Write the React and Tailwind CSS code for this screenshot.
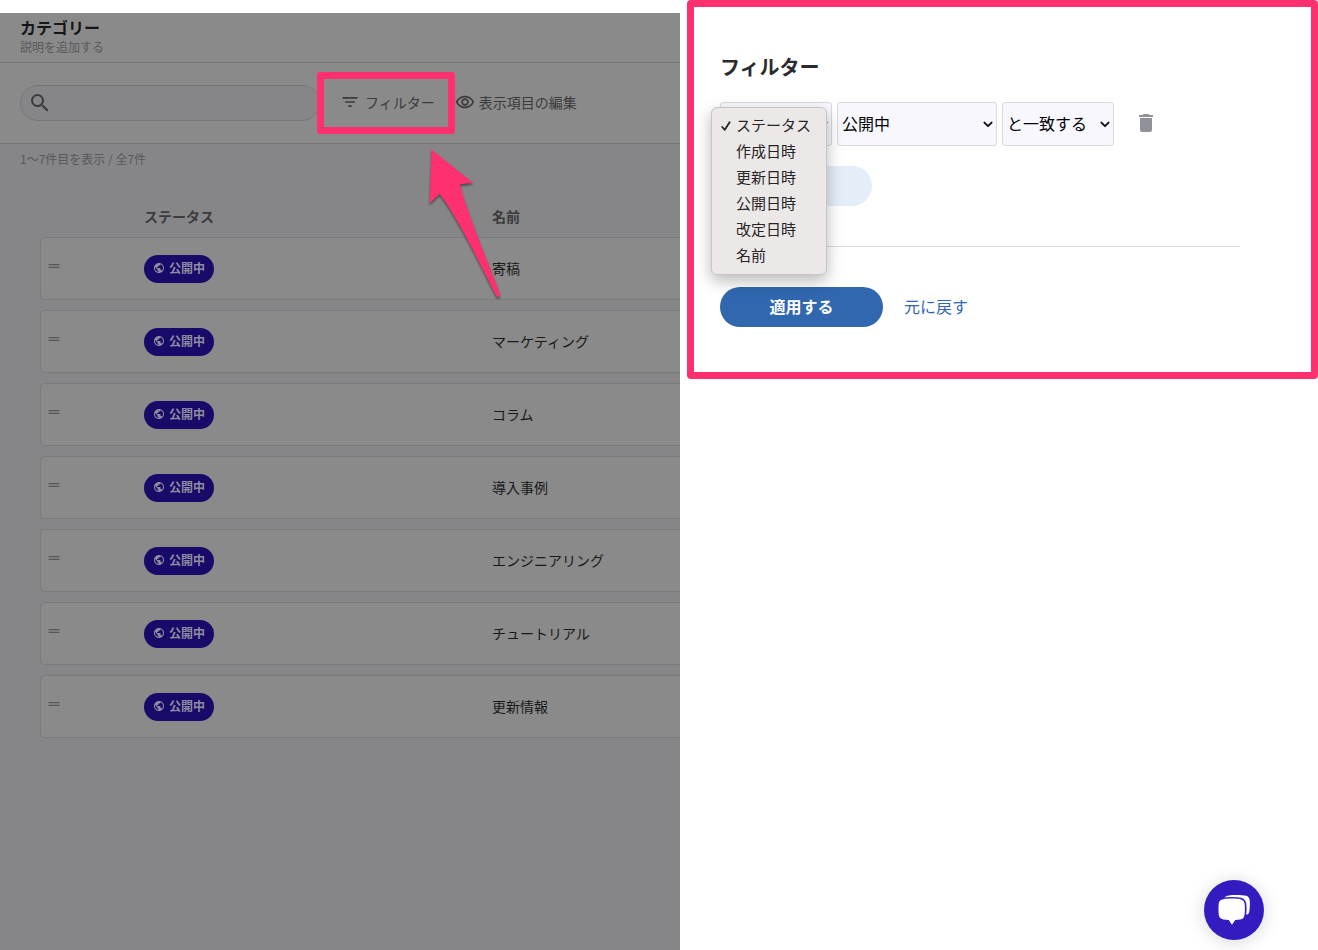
import React, { useState } from "react";
import {
  MdSearch,
  MdFilterList,
  MdOutlineRemoveRedEye,
  MdDragHandle,
  MdPublic,
  MdDelete,
} from "react-icons/md";

const categories = [
  "寄稿",
  "マーケティング",
  "コラム",
  "導入事例",
  "エンジニアリング",
  "チュートリアル",
  "更新情報",
];

const fields = ["ステータス", "作成日時", "更新日時", "公開日時", "改定日時", "名前"];

function StatusBadge() {
  return (
    <span className="inline-flex h-7 w-[70px] items-center justify-center gap-1 rounded-full bg-[#180a68] pb-px align-middle text-xs font-bold text-[#8e8ca0]">
      <MdPublic className="size-3 shrink-0" />
      公開中
    </span>
  );
}

function Arrow() {
  return (
    <svg
      className="pointer-events-none absolute top-[146px] left-[424px] h-[156px] w-[84px] drop-shadow-[0_2px_1px_rgba(0,0,0,0.45)]"
      viewBox="424 146 84 156"
      aria-hidden="true"
    >
      <path
        d="M431.5 149.5 L473 182.7 L460 184.3 C465 206 485 255 500 294 C500.6 297 497.5 298 496 295.5 C477 258 458 218 439.7 194 L429.7 203.3 Z"
        fill="#ff3070"
      />
    </svg>
  );
}

function CategoryList() {
  return (
    <main className="mt-[13px] flex min-w-0 flex-col overflow-hidden bg-[#868688]">
      <header className="flex h-[50px] flex-col border-b border-[#757577] bg-[#8a8a8a] px-5 pt-1">
        <h1 className="text-base leading-5 font-bold text-[#161617]">カテゴリー</h1>
        <p className="text-xs leading-5 text-[#58585c]">説明を追加する</p>
      </header>

      <div className="flex h-[81px] items-center border-b border-[#757577] bg-[#8a8a8a] px-5">
        <label className="flex h-9 w-[300px] shrink-0 items-center rounded-full border border-[#77777b] bg-[#868688] pl-[7px] text-[#3b3b3e]">
          <MdSearch className="size-6 shrink-0" />
          <input
            type="search"
            aria-label="検索"
            className="min-w-0 flex-1 bg-transparent px-2 text-sm outline-none"
          />
        </label>
        <button
          type="button"
          className="relative ml-5 flex shrink-0 items-center gap-[5px] pb-0.5 text-sm text-[#3b3b3e]"
        >
          <MdFilterList className="size-5" />
          フィルター
          <span className="pointer-events-none absolute top-1/2 -right-5 -left-[23px] h-[62px] -translate-y-1/2 rounded-[3px] border-[7px] border-[#ff3070]" />
        </button>
        <button
          type="button"
          className="ml-5 flex shrink-0 items-center gap-1 pb-0.5 text-sm text-[#3b3b3e]"
        >
          <MdOutlineRemoveRedEye className="size-5" />
          表示項目の編集
        </button>
      </div>

      <p className="px-5 pt-[5px] text-xs leading-5 text-[#58585c]">1〜7件目を表示 / 全7件</p>

      <div className="pt-7 pl-10">
        <table className="w-full table-fixed border-separate border-spacing-x-0 border-spacing-y-[10px] text-left text-sm">
          <colgroup>
            <col className="w-[104px]" />
            <col className="w-[348px]" />
            <col />
          </colgroup>
          <thead>
            <tr className="h-5 text-[#3b3b3e]">
              <th aria-label="並べ替え" />
              <th className="pb-0.5 leading-[18px] font-bold">ステータス</th>
              <th className="pb-0.5 leading-[18px] font-bold">名前</th>
            </tr>
          </thead>
          <tbody>
            {categories.map((name) => (
              <tr key={name} className="h-[63px] text-[#19191a]">
                <td className="rounded-l-[5px] border-y border-l border-[#7b7b7d] bg-[#8a8a8a] pb-1.5 pl-[5px] align-middle">
                  <MdDragHandle className="size-4 text-[#55555a]" />
                </td>
                <td className="border-y border-[#7b7b7d] bg-[#8a8a8a]">
                  <StatusBadge />
                </td>
                <td className="border-y border-[#7b7b7d] bg-[#8a8a8a] pb-0.5">{name}</td>
              </tr>
            ))}
          </tbody>
        </table>
      </div>
    </main>
  );
}

function Select({ label, options, className }) {
  return (
    <span className={"relative inline-flex h-11 shrink-0 " + className}>
      <select
        aria-label={label}
        className="w-full appearance-none rounded-[3px] border border-[#d9d9de] bg-[#f8f7fd] pr-5 pb-0.5 pl-1 text-base text-black"
      >
        {options.map((option) => (
          <option key={option}>{option}</option>
        ))}
      </select>
      <svg
        className="pointer-events-none absolute top-[19px] right-1 h-2 w-2.5"
        viewBox="0 0 10 8"
        fill="none"
        stroke="#111"
        strokeWidth="1.9"
        strokeLinecap="round"
        strokeLinejoin="round"
        aria-hidden="true"
      >
        <path d="M1.4 1.6 5 5.2 8.6 1.6" />
      </svg>
    </span>
  );
}

function FieldMenu() {
  const [selected, setSelected] = useState(fields[0]);
  return (
    <ul
      role="listbox"
      aria-label="項目"
      className="absolute top-[5px] -left-[9px] z-10 w-[116px] rounded-md border border-[#c9c5c5] bg-[#ece8e7] pt-1 pb-1.5 shadow-[0_6px_16px_rgba(0,0,0,0.28)]"
    >
      {fields.map((field) => (
        <li
          key={field}
          role="option"
          aria-selected={field === selected}
          onClick={() => setSelected(field)}
          className="flex h-[26px] items-center pl-[9px] text-[15px] whitespace-nowrap text-[#262525]"
        >
          <span className="w-[15px] shrink-0">
            {field === selected && (
              <svg
                className="h-3 w-[10px]"
                viewBox="0 0 10 12"
                fill="none"
                stroke="#262525"
                strokeWidth="1.8"
                strokeLinecap="round"
                strokeLinejoin="round"
                aria-hidden="true"
              >
                <path d="M1.2 8 3.8 10.8 8.6 3.2" />
              </svg>
            )}
          </span>
          {field}
        </li>
      ))}
    </ul>
  );
}

function FilterPanel() {
  return (
    <aside className="min-w-0 pl-[7px]">
      <section className="rounded-[4px] border-[7px] border-[#ff3070] pt-[46px] pr-[71px] pb-[45px] pl-[26px]">
        <h2 className="text-xl leading-7 font-bold text-[#2b2b2f]">フィルター</h2>

        <div className="relative mt-[21px] flex items-center gap-[5px]">
          <Select label="項目" options={fields} className="w-28" />
          <Select label="値" options={["公開中", "下書き"]} className="w-40" />
          <Select label="条件" options={["と一致する", "と一致しない"]} className="w-28" />
          <button type="button" aria-label="削除" className="ml-[15px] pb-0.5 text-[#919199]">
            <MdDelete className="size-6" />
          </button>
          <FieldMenu />
        </div>

        <button
          type="button"
          aria-label="条件を追加"
          className="mt-5 block h-10 w-[152px] rounded-full bg-[#e3eef9]"
        />

        <hr className="mt-10 border-t border-[#d9d9de]" />

        <div className="mt-10 flex items-center gap-[21px] text-base">
          <button
            type="button"
            className="h-10 w-[163px] rounded-full bg-[#3067af] pb-0.5 font-bold text-white"
          >
            適用する
          </button>
          <button type="button" className="pb-0.5 text-[#3067af]">
            元に戻す
          </button>
        </div>
      </section>
    </aside>
  );
}

function ChatButton() {
  return (
    <button
      type="button"
      aria-label="チャット"
      className="fixed right-[54px] bottom-[10px] flex size-[60px] items-center justify-center rounded-full bg-[#331cbf] shadow-[0_2px_18px_rgba(0,0,0,0.16)]"
    >
      <svg className="h-8 w-8" viewBox="0 0 32 32" aria-hidden="true">
        <path
          d="M6.5 3.4 C8.5 1.2 13 .9 17 .9 C22 .9 26 1 28.3 1.7 C30.8 2.4 31.6 4.4 31.8 7 C32 11 31.8 16 31 18.4 C30.6 19.8 29.8 20.4 28.8 20.7 Z"
          fill="#fff"
        />
        <path
          d="M5.4 5.2 C9 4.4 19 4.4 22.6 5.2 C25.2 5.9 26.4 7.4 26.7 10 C27 13 27 17 26.7 20 C26.3 23.6 25 25.1 22.2 25.5 C20.6 25.8 19 25.9 17.2 26 L14.6 30 Q14 30.8 13.4 30 L10.8 26 C8.8 25.9 7 25.8 5.4 25.5 C2.4 25.1 1 23.4 .7 20.6 C.4 17 .4 13 .7 9.8 C.9 7.2 2.4 5.8 5.4 5.2 Z"
          fill="#fff"
          stroke="#331cbf"
          strokeWidth="3.2"
          paintOrder="stroke"
        />
      </svg>
    </button>
  );
}

export default function App() {
  return (
    <div className="relative grid min-h-screen grid-cols-[680fr_638fr] bg-white font-['Noto_Sans_CJK_JP',sans-serif]">
      <CategoryList />
      <FilterPanel />
      <Arrow />
      <ChatButton />
    </div>
  );
}
